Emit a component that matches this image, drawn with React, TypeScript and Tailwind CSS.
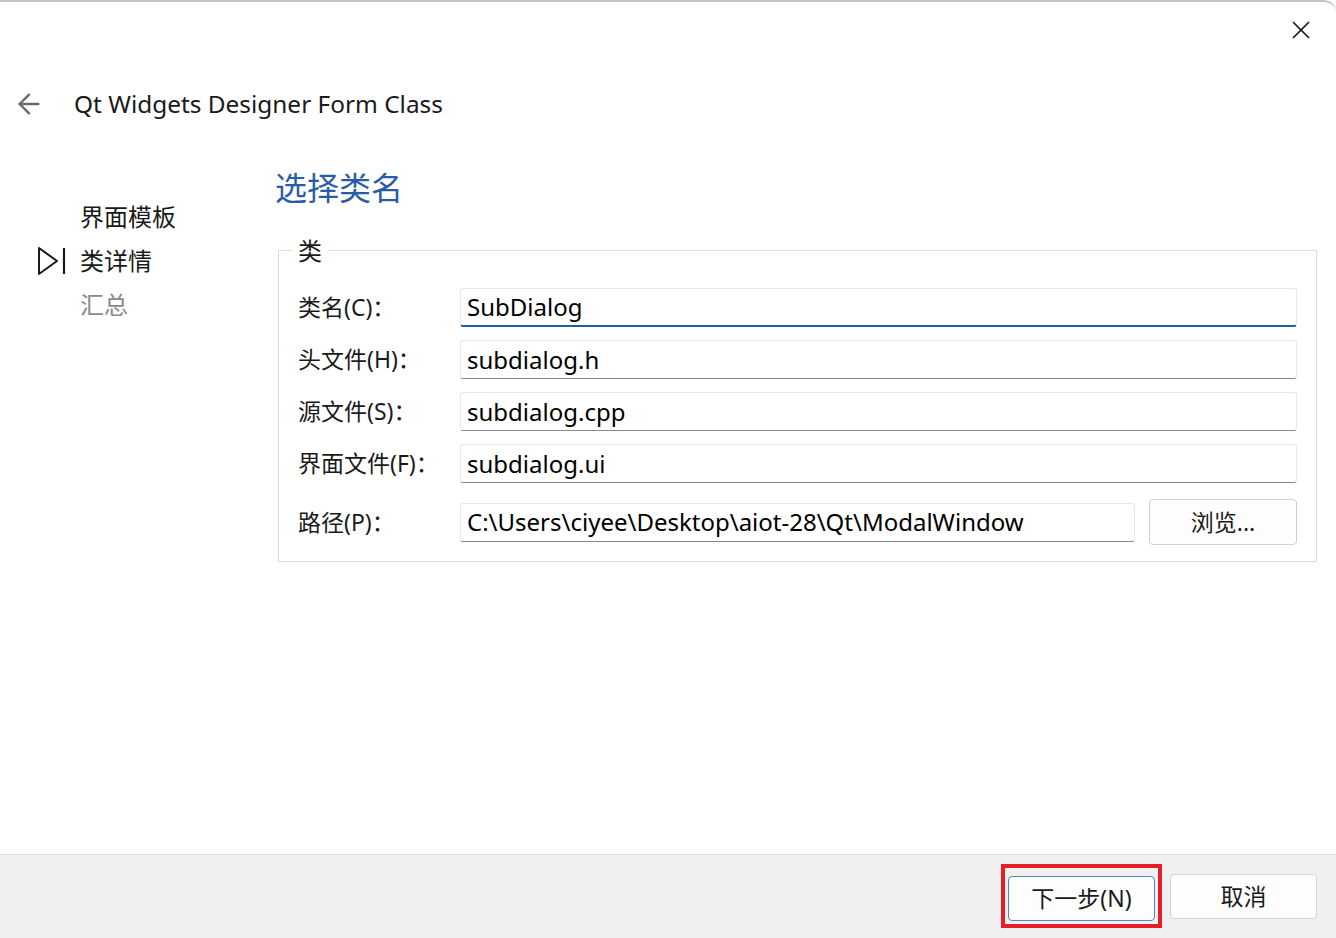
import { X, ArrowLeft } from 'lucide-react';

const FONT = { fontFamily: '"Noto Sans", "Noto Sans CJK SC", sans-serif' };

const rows = [
  { label: '类名(C)：', value: 'SubDialog', focused: true },
  { label: '头文件(H)：', value: 'subdialog.h' },
  { label: '源文件(S)：', value: 'subdialog.cpp' },
  { label: '界面文件(F)：', value: 'subdialog.ui' },
];

function Field({ value, focused }: { value: string; focused?: boolean }) {
  return (
    <div
      className={`flex-1 h-[39px] flex items-center px-[6px] bg-white border border-[#e6e6e6] rounded-[3px] text-[24px] text-black ${
        focused ? 'border-b-2 border-b-[#1c60a8]' : 'border-b-[#8a8a8a]'
      }`}
    >
      {value}
    </div>
  );
}

export default function App() {
  return (
    <div
      className="w-[1336px] h-[938px] bg-white flex flex-col overflow-hidden border-t-2 border-[#c4c4c4] rounded-tr-[12px]"
      style={FONT}
    >
      {/* Title bar */}
      <div className="h-[56px] flex justify-end items-start pr-[20px] pt-[13px]">
        <X size={30} strokeWidth={1.4} className="text-[#1a1a1a]" />
      </div>

      <div className="flex items-center h-[96px] -mt-[2px]">
        <ArrowLeft size={32} strokeWidth={1.8} className="ml-[13px] text-[#6b6b6b]" />
        <span className="ml-[29px] text-[24.4px] text-[#1a1a1a]">Qt Widgets Designer Form Class</span>
      </div>

      <div className="flex flex-1">
        {/* Left nav */}
        <div className="w-[278px] pt-[49px] flex flex-col gap-[12px]">
          <div className="pl-[80px] text-[24px] text-[#1a1a1a] h-[32px] leading-[32px]">界面模板</div>
          <div className="flex items-center h-[32px] text-[24px] text-[#1a1a1a]">
            <svg width="30" height="30" viewBox="0 0 30 30" className="ml-[37px] mr-[13px]">
              <path d="M2 2 L20 15 L2 28 Z" fill="none" stroke="#1a1a1a" strokeWidth="2" strokeLinejoin="round" />
              <path d="M27 2 V28" stroke="#1a1a1a" strokeWidth="2.2" />
            </svg>
            类详情
          </div>
          <div className="pl-[80px] text-[24px] text-[#8a8a8a] h-[32px] leading-[32px]">汇总</div>
        </div>

        {/* Content */}
        <div className="flex-1 pr-[19px]">
          <div className="ml-[-3px] mt-[15px] text-[32px] text-[#2a5ca6] leading-[42px]">选择类名</div>

          <div className="relative mt-[41px] border border-[#dcdcdc] h-[312px] pl-[19px] pr-[19px] pt-[37px]">
            <span className="absolute -top-[18px] left-[14px] px-[5px] bg-white text-[24px] text-[#1a1a1a] leading-[36px]">
              类
            </span>
            <div className="flex flex-col gap-[13px]">
              {rows.map((r) => (
                <div key={r.label} className="flex items-center">
                  <div className="w-[162px] text-[23px] text-[#1a1a1a]">{r.label}</div>
                  <Field value={r.value} focused={r.focused} />
                </div>
              ))}
              <div className="flex items-center mt-[3px]">
                <div className="w-[162px] text-[23px] text-[#1a1a1a]">路径(P)：</div>
                <Field value="C:\Users\ciyee\Desktop\aiot-28\Qt\ModalWindow" />
                <button className="ml-[14px] w-[148px] h-[46px] bg-[#fdfdfd] border border-[#d0d0d0] rounded-[4px] text-[23px] text-[#1a1a1a]">
                  浏览...
                </button>
              </div>
            </div>
          </div>
        </div>
      </div>

      {/* Bottom bar */}
      <div className="h-[84px] bg-[#f0f0f0] border-t border-[#dedede] flex items-center justify-end pr-[19px] gap-[8px]">
        <div className="border-[4px] border-[#e3202a] pt-[8px] pb-[3px] px-[3px] -mt-[2px]">
          <button className="block w-[147px] h-[45px] bg-[#fdfdfd] border border-[#5f84ad] rounded-[4px] text-[23px] text-[#1a1a1a]">
            下一步(N)
          </button>
        </div>
        <button className="w-[147px] h-[45px] bg-[#fdfdfd] border border-[#d4d4d4] rounded-[4px] text-[23px] text-[#1a1a1a]">
          取消
        </button>
      </div>
    </div>
  );
}
